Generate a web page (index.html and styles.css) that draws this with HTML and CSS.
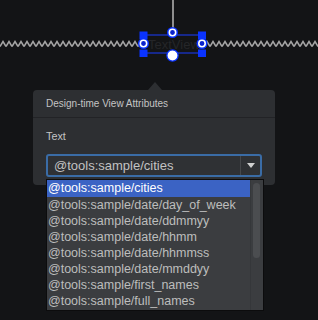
FILE: index.html
```html
<!DOCTYPE html>
<html lang="en">
<head>
  <meta charset="UTF-8">
  <title>Design-time View Attributes</title>
  <link rel="stylesheet" href="styles.css">
</head>
<body>
  <div class="canvas">
    <svg width="318" height="90" viewBox="0 0 318 90">
      <defs>
        <pattern id="zig" x="0" y="0" width="6" height="90" patternUnits="userSpaceOnUse">
          <polyline points="0,46.5 3,41.5 6,46.5" fill="none" stroke="#a4a4a4" stroke-width="1.5"/>
        </pattern>
      </defs>
      <rect x="0" y="38" width="139" height="12" fill="url(#zig)"/>
      <rect x="206" y="38" width="112" height="12" fill="url(#zig)"/>
      <line x1="173" y1="0" x2="173" y2="28" stroke="#8e8e8e" stroke-width="2"/>
      <text x="148" y="48.5" class="ghost">TextView</text>
      <line x1="146" y1="35" x2="199" y2="35" stroke="#1a3cff" stroke-width="1.2"/>
      <line x1="146" y1="53" x2="199" y2="53" stroke="#1a3cff" stroke-width="1.2"/>
      <rect x="139.5" y="31.5" width="8" height="7.5" fill="#0a33ff"/>
      <rect x="139.5" y="49.5" width="8" height="7.5" fill="#0a33ff"/>
      <rect x="198" y="31.5" width="8" height="7.5" fill="#0a33ff"/>
      <rect x="198" y="49.5" width="8" height="7.5" fill="#0a33ff"/>
      <circle cx="172.5" cy="32.5" r="5.5" fill="#0a33ff"/>
      <circle cx="172.5" cy="32.5" r="3.2" fill="#0a22cc" stroke="#fff" stroke-width="1.6"/>
      <circle cx="143.5" cy="43.5" r="5.5" fill="#0a33ff"/>
      <circle cx="143.5" cy="43.5" r="3.2" fill="#0a22cc" stroke="#fff" stroke-width="1.6"/>
      <circle cx="202" cy="43.5" r="5.5" fill="#0a33ff"/>
      <circle cx="202" cy="43.5" r="3.2" fill="#0a22cc" stroke="#fff" stroke-width="1.6"/>
      <circle cx="172.5" cy="55.5" r="5.6" fill="#fff" stroke="#0a33ff" stroke-width="1.3"/>
    </svg>
  </div>

  <div class="panel">
    <div class="panel-head">Design-time View Attributes</div>
    <div class="panel-body">
      <div class="field-label">Text</div>
      <div class="combo">
        <span class="combo-value">@tools:sample/cities</span>
        <span class="combo-arrow"></span>
      </div>
    </div>
  </div>

  <div class="popup">
    <ul class="options">
      <li class="selected">@tools:sample/cities</li>
      <li>@tools:sample/date/day_of_week</li>
      <li>@tools:sample/date/ddmmyy</li>
      <li>@tools:sample/date/hhmm</li>
      <li>@tools:sample/date/hhmmss</li>
      <li>@tools:sample/date/mmddyy</li>
      <li>@tools:sample/first_names</li>
      <li>@tools:sample/full_names</li>
    </ul>
    <div class="scrollbar"><div class="thumb"></div></div>
  </div>
</body>
</html>
```

FILE: styles.css
```css
body {
  margin: 0;
  width: 318px;
  height: 320px;
  overflow: hidden;
  background-color: #131416;
  font-family: 'Liberation Sans', Arial, sans-serif;
  position: relative;
}

.canvas {
  height: 90px;
}

.canvas svg {
  display: block;
}

.ghost {
  font-family: 'Liberation Sans', Arial, sans-serif;
  font-size: 13px;
  fill: #252629;
}

.panel {
  position: relative;
  margin-left: 33px;
  width: 242px;
  height: 95px;
  background-color: #2d2f32;
  border-radius: 4px;
}

/* little pointer up to the selected view */
.panel::before {
  content: "";
  position: absolute;
  top: -8px;
  left: 115px;
  border-left: 7px solid transparent;
  border-right: 7px solid transparent;
  border-bottom: 8px solid #2d2f32;
}

.panel-head {
  height: 27px;
  line-height: 28px;
  padding-left: 13px;
  font-size: 10px;
  color: #c4c4c4;
  border-bottom: 1px solid #222326;
}

.panel-body {
  padding: 12px 13px 0 13px;
}

.field-label {
  font-size: 10.8px;
  color: #c4c4c4;
  height: 13px;
  margin-bottom: 11px;
}

.combo {
  display: flex;
  align-items: center;
  width: 212px;
  height: 19px;
  border: 2px solid #3a6ca6;
  border-radius: 3px;
  background-color: #2f3134;
}

.combo-value {
  flex: 1;
  padding-left: 6px;
  font-size: 13px;
  color: #c2c2c2;
}

.combo-arrow {
  width: 19px;
  height: 19px;
  border-left: 1px solid #46484b;
  display: flex;
  align-items: center;
  justify-content: center;
}

.combo-arrow::after {
  content: "";
  border-left: 4px solid transparent;
  border-right: 4px solid transparent;
  border-top: 5px solid #d0d0d0;
}

.popup {
  position: absolute;
  left: 46px;
  top: 179px;
  width: 216px;
  height: 130px;
  background-color: #3b3d40;
  border: 1px solid #0c0c0d;
  display: flex;
}

.options {
  list-style: none;
  margin: 0;
  padding: 0;
  flex: 1;
}

.options li {
  height: 16px;
  line-height: 16px;
  padding-left: 1px;
  font-size: 12.5px;
  color: #bdbdbd;
  white-space: nowrap;
}

.options li.selected {
  background-color: #3b63c4;
  color: #ffffff;
  height: 17px;
}

.scrollbar {
  width: 12px;
  border-left: 1px solid #35373a;
  padding-top: 3px;
}

.thumb {
  width: 7px;
  height: 75px;
  margin-left: 2px;
  border-radius: 4px;
  background-color: #4b4d50;
}
```
